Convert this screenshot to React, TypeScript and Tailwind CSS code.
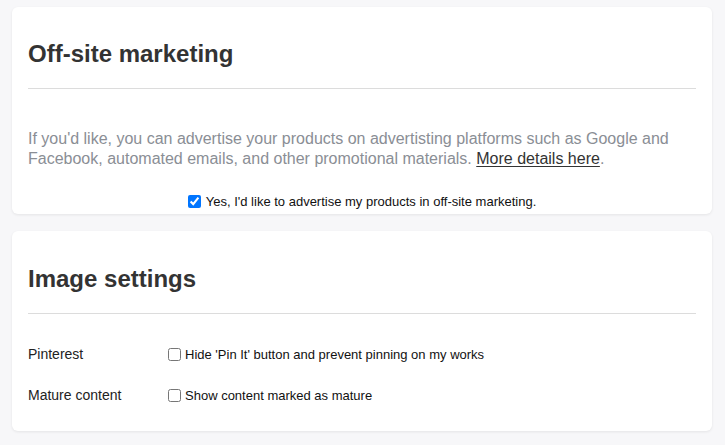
import React from "react";

export default function App() {
  return (
    <div
      className="min-h-[445px] w-full bg-[#f7f7f9] pt-[7px] pb-[13px] pl-[12px]"
      style={{ fontFamily: '"Liberation Sans", Arial, sans-serif' }}
    >
      <div className="w-[700px] rounded-md bg-white px-[16px] pt-[31px] pb-[3px] shadow-[0_1px_3px_rgba(0,0,0,0.08)]">
        <h2 className="border-b border-[#dcdcdc] pb-[18px] text-[24px] font-bold leading-[32px] text-[#333333]">
          Off-site marketing
        </h2>
        <p className="mt-[40px] text-[16px] leading-[20px] text-[#8a8e95]">
          If you'd like, you can advertise your products on advertisting platforms such as Google and
          Facebook, automated emails, and other promotional materials.{" "}
          <a href="#" className="text-[#333333] underline underline-offset-[2px]">
            More details here
          </a>
          .
        </p>
        <div className="mt-[23px] flex h-[19px] items-center justify-center">
          <input type="checkbox" defaultChecked className="m-0 h-[13px] w-[13px]" />
          <span className="ml-[5px] text-[13px] leading-[15px] text-[#111111]">
            Yes, I'd like to advertise my products in off-site marketing.
          </span>
        </div>
      </div>

      <div className="mt-[17px] w-[700px] rounded-md bg-white px-[16px] pt-[32px] pb-[15px] shadow-[0_1px_3px_rgba(0,0,0,0.08)]">
        <h2 className="border-b border-[#dcdcdc] pb-[18px] text-[24px] font-bold leading-[32px] text-[#333333]">
          Image settings
        </h2>
        <div className="mt-[20px] flex flex-col">
          <div className="flex h-[41px] items-center">
            <div className="w-[140px] text-[14px] text-[#222222]">Pinterest</div>
            <input type="checkbox" className="m-0 h-[13px] w-[13px]" />
            <span className="ml-[4px] text-[13px] leading-[15px] text-[#111111]">
              Hide 'Pin It' button and prevent pinning on my works
            </span>
          </div>
          <div className="flex h-[41px] items-center">
            <div className="w-[140px] text-[14px] text-[#222222]">Mature content</div>
            <input type="checkbox" className="m-0 h-[13px] w-[13px]" />
            <span className="ml-[4px] text-[13px] leading-[15px] text-[#111111]">
              Show content marked as mature
            </span>
          </div>
        </div>
      </div>
    </div>
  );
}
